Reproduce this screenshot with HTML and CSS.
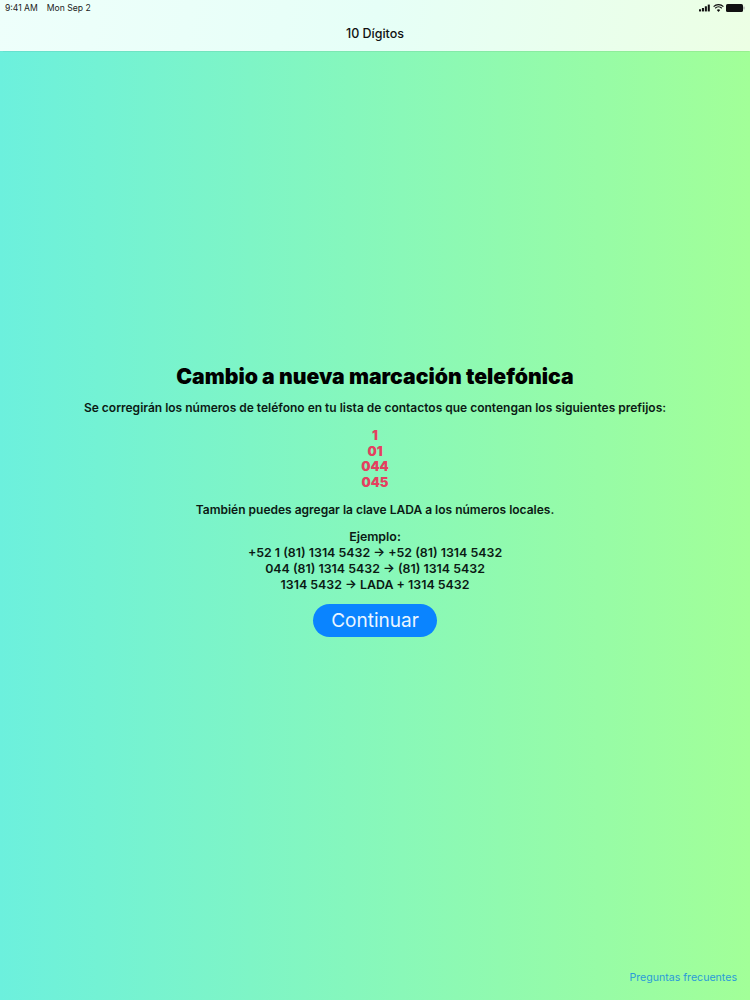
FILE: index.html
```html
<!DOCTYPE html>
<html lang="es">
<head>
<meta charset="utf-8">
<title>10 Dígitos</title>
<link rel="stylesheet" href="styles.css">
</head>
<body>
<div class="app">
  <header class="topbar">
    <div class="status">
      <div class="status-left"><span>9:41 AM</span><span>Mon Sep 2</span></div>
      <div class="status-right">
        <svg class="ic-signal" width="12" height="8" viewBox="0 0 14 8"><rect x="0" y="5.5" width="2.4" height="2.5" fill="#111"/><rect x="3.4" y="4" width="2.4" height="4" fill="#111"/><rect x="6.8" y="2" width="2.4" height="6" fill="#111"/><rect x="10.2" y="0" width="2.4" height="8" fill="#111"/></svg>
        <svg class="ic-wifi" width="11" height="8" viewBox="0 0 11 8"><path d="M.6 2.6a7 7 0 0 1 9.8 0M2.2 4.3a4.7 4.7 0 0 1 6.6 0" fill="none" stroke="#111" stroke-width="1.2"/><path d="M5.5 8 3.8 6a2.5 2.5 0 0 1 3.4 0z" fill="#111"/></svg>
        <svg class="ic-batt" width="19" height="8" viewBox="0 0 19 8"><rect x="0" y="0" width="17" height="8" rx="1.6" fill="#111"/><rect x="17.5" y="2.6" width="1" height="2.8" fill="#999"/></svg>
      </div>
    </div>
    <div class="nav-title">10 Dígitos</div>
  </header>
  <main class="content">
    <h1 class="title">Cambio a nueva marcación telefónica</h1>
    <p class="line intro">Se corregirán los números de teléfono en tu lista de contactos que contengan los siguientes prefijos:</p>
    <div class="prefixes">
      <div>1</div>
      <div>01</div>
      <div>044</div>
      <div>045</div>
    </div>
    <p class="line">También puedes agregar la clave LADA a los números locales.</p>
    <div class="examples">
      <div>Ejemplo:</div>
      <div>+52 1 (81) 1314 5432 → +52 (81) 1314 5432</div>
      <div>044 (81) 1314 5432 → (81) 1314 5432</div>
      <div>1314 5432 → LADA + 1314 5432</div>
    </div>
    <button class="cta" type="button">Continuar</button>
  </main>
  <a class="faq" href="#">Preguntas frecuentes</a>
</div>
</body>
</html>
```
FILE: styles.css
```css
* { box-sizing: border-box; }
html, body { margin: 0; padding: 0; }
body { font-family: Inter, "Liberation Sans", sans-serif; color: #0b1a14; }
.app {
  width: 750px;
  height: 1000px;
  display: flex;
  flex-direction: column;
  overflow: hidden;
  background: linear-gradient(90deg, #6cf0dd 0%, #a2ff98 100%);
}
.topbar {
  height: 51px;
  flex: none;
  background: linear-gradient(100deg, #eefffb 0%, #e6fff7 50%, #ecffe4 100%);
  box-shadow: 0 0.5px 1px rgba(0,0,0,.06);
}
.status {
  height: 15px;
  padding: 0 5px;
  display: flex;
  justify-content: space-between;
  align-items: center;
  font-size: 8.6px;
  color: #222;
}
.status-left { display: flex; gap: 9px; }
.status-right { display: flex; align-items: center; gap: 2px; }
.nav-title {
  margin-top: 11px;
  text-align: center;
  font-size: 12.5px;
  line-height: 16px;
  font-weight: 500;
  color: #111;
}
.content {
  flex: 1;
  padding-top: 313px;
  display: flex;
  flex-direction: column;
  align-items: center;
  text-align: center;
}
.title {
  margin: 0;
  font-size: 21.2px;
  line-height: 25px;
  font-weight: 900;
  color: #000;
}
.line {
  margin: 0;
  font-size: 12px;
  line-height: 16px;
  font-weight: 600;
}
.intro { margin-top: 11px; }
.prefixes {
  margin-top: 12px;
  font-size: 13px;
  line-height: 15.7px;
  font-weight: 900;
  color: #e4405f;
  margin-bottom: 11px;
}
.examples {
  margin-top: 11px;
  font-size: 12.4px;
  line-height: 16px;
  font-weight: 600;
}
.cta {
  margin-top: 11px;
  width: 124px;
  height: 33.5px;
  border: 0;
  border-radius: 17px;
  background: #0a84ff;
  color: #eaf6ff;
  font-family: inherit;
  font-size: 19px;
  font-weight: 400;
  padding: 0;
}
.faq {
  position: absolute;
  right: 13px;
  top: 971px;
  font-size: 10.6px;
  line-height: 14px;
  color: #2a9bd8;
  text-decoration: none;
}
```
